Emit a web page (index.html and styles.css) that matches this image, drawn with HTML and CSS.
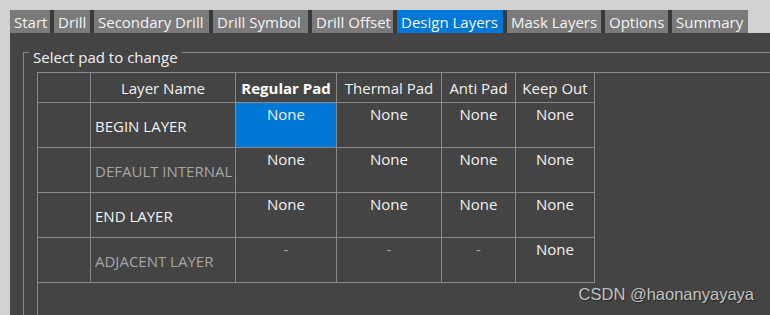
FILE: index.html
```html
<!DOCTYPE html>
<html lang="en">
<head>
<meta charset="utf-8">
<title>Design Layers</title>
<link rel="stylesheet" href="styles.css">
</head>
<body>
<div class="app">
  <nav class="tabs">
    <div class="tab t-start">Start</div>
    <div class="tab t-drill">Drill</div>
    <div class="tab t-secondary">Secondary Drill</div>
    <div class="tab t-symbol">Drill Symbol</div>
    <div class="tab t-offset">Drill Offset</div>
    <div class="tab t-design active">Design Layers</div>
    <div class="tab t-mask">Mask Layers</div>
    <div class="tab t-options">Options</div>
    <div class="tab t-summary">Summary</div>
  </nav>
  <section class="panel">
    <div class="group">
      <div class="group-title">Select pad to change</div>
      <div class="grid-box">
        <div class="grid">
          <div class="hcell"></div>
          <div class="hcell">Layer Name</div>
          <div class="hcell bold">Regular Pad</div>
          <div class="hcell">Thermal Pad</div>
          <div class="hcell">Anti Pad</div>
          <div class="hcell">Keep Out</div>

          <div class="cell"></div>
          <div class="cell name">BEGIN LAYER</div>
          <div class="cell val selected">None</div>
          <div class="cell val">None</div>
          <div class="cell val">None</div>
          <div class="cell val">None</div>

          <div class="cell"></div>
          <div class="cell name dim">DEFAULT INTERNAL</div>
          <div class="cell val">None</div>
          <div class="cell val">None</div>
          <div class="cell val">None</div>
          <div class="cell val">None</div>

          <div class="cell"></div>
          <div class="cell name">END LAYER</div>
          <div class="cell val">None</div>
          <div class="cell val">None</div>
          <div class="cell val">None</div>
          <div class="cell val">None</div>

          <div class="cell"></div>
          <div class="cell name dim">ADJACENT LAYER</div>
          <div class="cell val dim">-</div>
          <div class="cell val dim">-</div>
          <div class="cell val dim">-</div>
          <div class="cell val">None</div>
        </div>
      </div>
    </div>
  </section>
  <div class="watermark">CSDN @haonanyayaya</div>
</div>
</body>
</html>
```
FILE: styles.css
```css
html, body {
  margin: 0;
  padding: 0;
}
body {
  background: #d1d1d1;
  font-family: "Open Sans", "Noto Sans", sans-serif;
  font-size: 15px;
  color: #f2f2f2;
  overflow: hidden;
}
.app {
  position: relative;
  width: 770px;
  height: 315px;
  padding: 10px 0 0 10px;
  box-sizing: border-box;
}
.tabs {
  display: flex;
  height: 23px;
}
.tab {
  flex: none;
  height: 23px;
  box-sizing: border-box;
  padding: 2px 0 0 4px;
  line-height: 21px;
  background: #7a7a7a;
  color: #f4f4f4;
  white-space: nowrap;
  overflow: hidden;
}
.tab + .tab {
  border-left: 4px solid #3a3a3a;
}
.tab.active {
  background: #0078d7;
}
.t-start { width: 40px; }
.t-drill { width: 40px; }
.t-secondary { width: 119px; }
.t-symbol { width: 99px; }
.t-offset { width: 85px; }
.t-design { width: 110px; }
.t-mask { width: 98px; }
.t-options { width: 67px; }
.t-summary { width: 80px; }
.panel {
  height: 282px;
  box-sizing: border-box;
  padding: 19px 0 0 13px;
  background: #444444;
  overflow: hidden;
}
.group {
  height: 100%;
  border-top: 1px solid #8a8a8a;
  border-left: 1px solid #8a8a8a;
}
.group-title {
  width: fit-content;
  margin: -6px 0 0 5px;
  padding: 0 4px;
  background: #444444;
  font-size: 15px;
  line-height: 20px;
  color: #f2f2f2;
}
.grid-box {
  height: 300px;
  margin: 5px 0 0 13px;
  border-top: 1px solid #8a8a8a;
  border-left: 1px solid #8a8a8a;
}
.grid {
  display: grid;
  grid-template-columns: 53px 145px 101px 105px 74px 79px;
  grid-template-rows: 30px repeat(4, 45px);
  width: fit-content;
}
.hcell, .cell {
  box-sizing: border-box;
  border-right: 1px solid #8a8a8a;
  border-bottom: 1px solid #8a8a8a;
  line-height: 20px;
  white-space: nowrap;
}
.hcell {
  display: flex;
  align-items: center;
  justify-content: center;
  padding-top: 1px;
}
.bold {
  font-weight: 700;
  color: #ffffff;
}
.name {
  padding: 13px 0 0 4px;
}
.val {
  text-align: center;
  padding-top: 1px;
}
.dim {
  color: #a6a6a6;
}
.selected {
  background: #0078d7;
}
.watermark {
  position: absolute;
  right: 16px;
  top: 284px;
  font-family: "Liberation Sans", Arial, sans-serif;
  font-size: 16.5px;
  line-height: 20px;
  color: #c2c2c2;
  text-shadow: 1px 1px 1px #262626;
}
```
